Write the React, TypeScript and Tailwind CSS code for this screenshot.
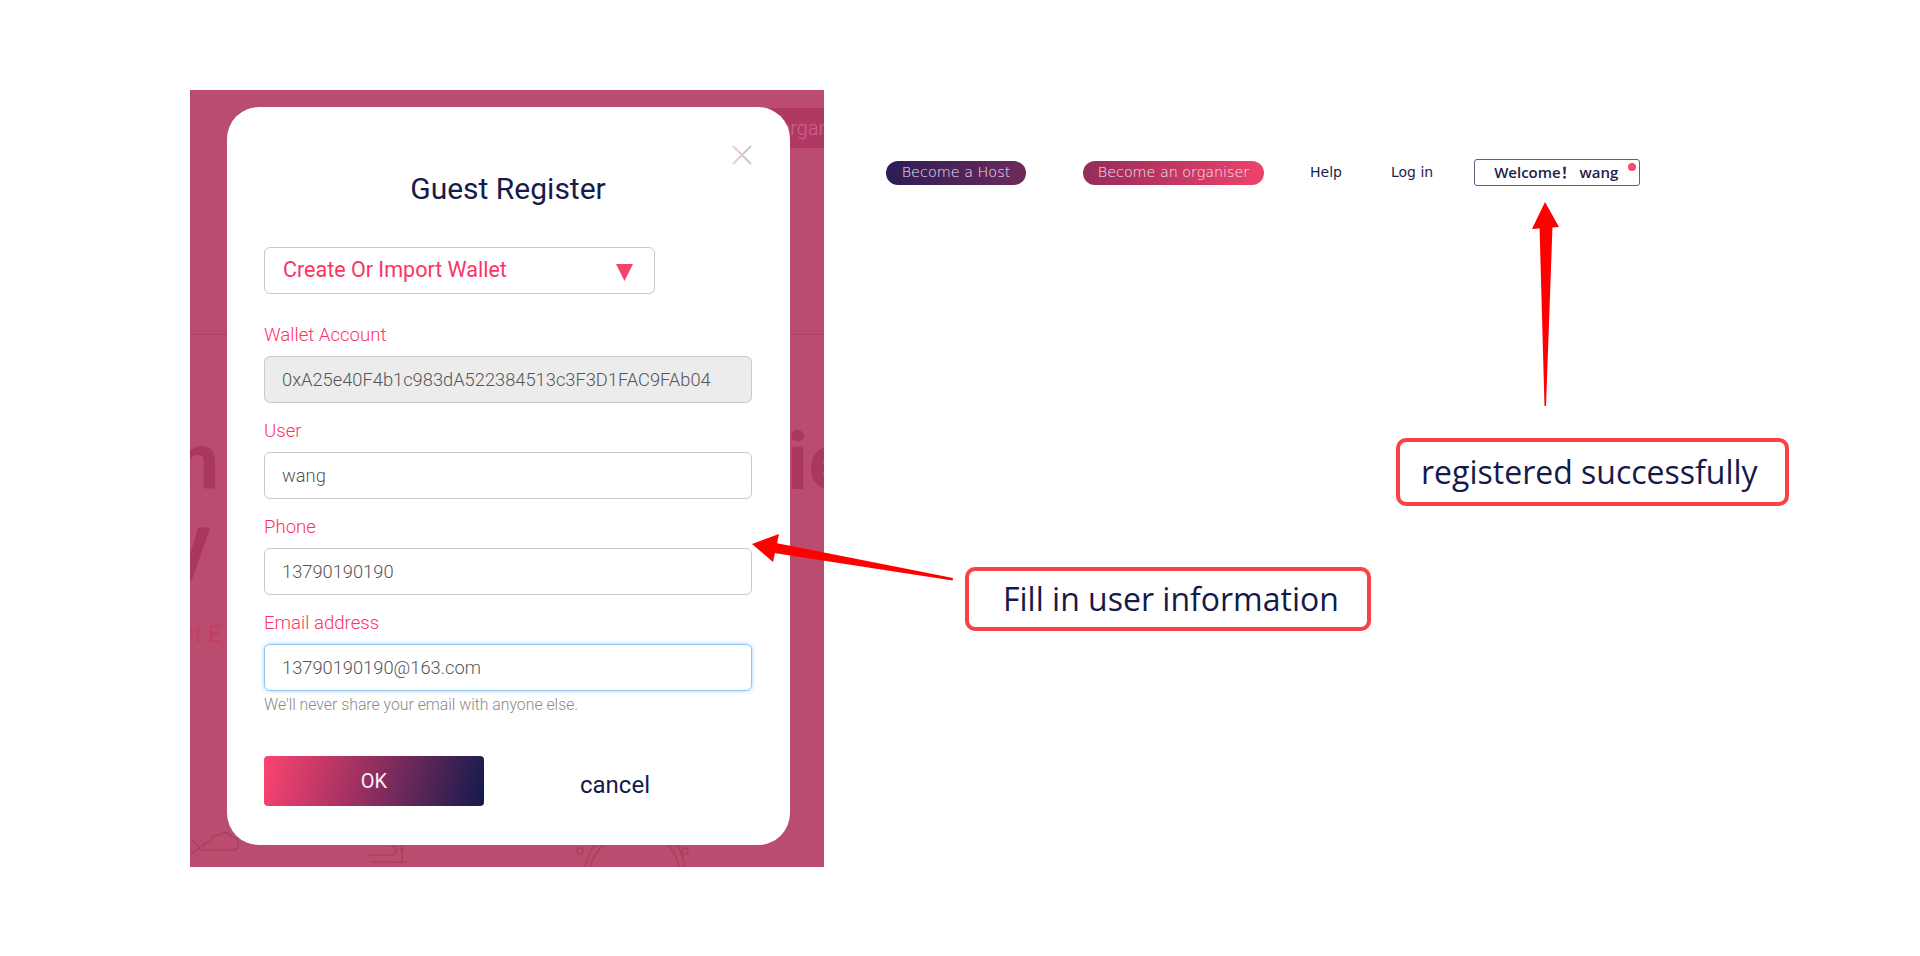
import React from "react";

const field =
  "h-[47px] w-full rounded-[6px] border border-[#c9c9c9] pl-[17px] text-[18.3px] font-light text-[#555555] flex items-center";

function Label({ children }: { children: React.ReactNode }) {
  return (
    <div className="h-[24px] leading-[24px] text-[18.6px] font-light text-[#fc3367]">
      {children}
    </div>
  );
}

function Underlay() {
  return (
    <>
      {/* faded nav strip of the page behind the overlay */}
      <div className="absolute left-[560px] top-[18px] h-[40px] w-[200px] bg-[#b13862]" />
      <div className="absolute left-[589px] top-[18px] h-[40px] flex items-center text-[20px] font-light text-[#c9658a]">
        organiser
      </div>
      <div className="absolute left-0 top-[244px] h-[1px] w-full bg-[#ad3f66]" />
      {/* hero text hidden behind the dialog */}
      <div className="absolute left-[-40px] top-[333px] h-[78px] overflow-hidden text-[80px] leading-[78px] font-bold text-[#a9375f]">m</div>
      <div className="absolute left-[597px] top-[333px] h-[78px] overflow-hidden text-[80px] leading-[78px] font-bold text-[#a9375f]">ie</div>
      <div className="absolute left-[-20px] top-[420px] text-[80px] leading-[66px] font-bold text-[#a9375f]">y</div>
      <div className="absolute left-[-8px] top-[530px] text-[24px] leading-[28px] text-[#c63c62]">st E</div>
      {/* faint background doodles */}
      <svg className="absolute left-0 top-[730px]" width="634" height="47" viewBox="0 0 634 47" fill="none" stroke="#a8405f" strokeWidth="1.5">
        <path d="M12 30 q0 -8 8 -8 q2 -8 10 -7 q6 -6 12 2 q7 0 6 8 q0 5 -6 5 h-24 q-6 0 -6 0z" />
        <path d="M2 20 l8 8 M0 34 l10 -6" />
        <path d="M178 35 h22 q6 0 6 -5 q0 -4 -5 -4 M182 42 h30" />
        <path d="M212 20 v22 M208 42 h8 M210 30 h4" />
        <path d="M395 47 q10 -40 50 -42 q44 2 50 42" />
        <path d="M400 47 q10 -32 45 -34 q38 2 44 34" />
        <circle cx="390" cy="31" r="3" />
        <circle cx="495" cy="31" r="3" />
      </svg>
    </>
  );
}

function CloseX() {
  return (
    <svg width="20" height="20" viewBox="0 0 20 20" className="absolute right-[38px] top-[38px]">
      <defs>
        <linearGradient id="xg" x1="0" y1="0" x2="1" y2="0">
          <stop offset="0" stopColor="#f7c9d5" />
          <stop offset="1" stopColor="#c3c6d4" />
        </linearGradient>
      </defs>
      <path d="M1 1 L19 19 M19 1 L1 19" stroke="url(#xg)" strokeWidth="2" />
    </svg>
  );
}

function Modal() {
  return (
    <div className="absolute left-[37px] top-[17px] h-[738px] w-[563px] rounded-[32px] bg-white pl-[37px] pr-[38px] pt-[64px] font-['Roboto',sans-serif]">
      <CloseX />
      <div className="text-center text-[30px] leading-[36px] text-[#161b4b]">Guest Register</div>

      <div className="mt-[40px] flex h-[47px] w-[391px] items-center justify-between rounded-[6px] border border-[#c9c9c9] pl-[18px] pr-[21px]">
        <span className="text-[21.5px] text-[#fc3367]">Create Or Import Wallet</span>
        <svg width="17" height="17" viewBox="0 0 17 17" className="mt-[3px]">
          <polygon points="0,0 17,0 8.5,17" fill="#f7416e" />
        </svg>
      </div>

      <div className="mt-[29px] flex flex-col gap-[16px]">
        <div>
          <Label>Wallet Account</Label>
          <div className={field + " mt-[9px] bg-[#ececec]"}>0xA25e40F4b1c983dA522384513c3F3D1FAC9FAb04</div>
        </div>
        <div>
          <Label>User</Label>
          <div className={field + " mt-[9px] bg-white"}>wang</div>
        </div>
        <div>
          <Label>Phone</Label>
          <div className={field + " mt-[9px] bg-white"}>13790190190</div>
        </div>
        <div>
          <Label>Email address</Label>
          <div className="mt-[9px] flex h-[47px] w-full items-center rounded-[6px] border border-[#8fc4f3] bg-white pl-[17px] text-[18.3px] font-light text-[#555555] shadow-[0_0_4px_rgba(64,150,255,0.45)]">
            13790190190@163.com
          </div>
        </div>
      </div>
      <div className="mt-[3px] text-[15.8px] leading-[22px] font-light text-[#8a8a8a]">
        We'll never share your email with anyone else.
      </div>

      <div className="mt-[40px] flex items-center">
        <div className="flex h-[50px] w-[220px] items-center justify-center rounded-[4px] bg-[linear-gradient(105deg,#fd4470_0%,#9a3060_45%,#121a4d_100%)] text-[20px] text-[#f6eef2]">
          OK
        </div>
        <div className="mt-[7px] flex-1 pr-[6px] text-center text-[24px] leading-[28px] text-[#141a4a]">cancel</div>
      </div>
    </div>
  );
}

function Nav() {
  return (
    <div className="flex items-center font-['DejaVu_Sans',sans-serif]">
      <div className="flex h-[24px] w-[140px] items-center justify-center rounded-full bg-[linear-gradient(90deg,#2b1d56,#6e2a5b)] text-[14.4px] font-extralight text-[#eee2f3]">
        Become a Host
      </div>
      <div className="ml-[57px] flex h-[24px] w-[181px] items-center justify-center rounded-full bg-[linear-gradient(90deg,#942c5b,#ee436b)] text-[14.3px] font-extralight text-[#f6e4ee]">
        Become an organiser
      </div>
      <div className="ml-[46px] text-[14px] text-[#1b1f4a]">Help</div>
      <div className="ml-[49px] text-[14px] text-[#1b1f4a]">Log in</div>
      <div className="relative ml-[41px] flex h-[27px] w-[166px] items-center rounded-[3px] border-[1.5px] border-[#5d6088] pl-[19px] font-['Open_Sans','Noto_Sans_CJK_SC',sans-serif] text-[15px] font-semibold text-[#1b1f4a]">
        Welcome！ wang
        <span className="absolute right-[3px] top-[3px] h-[8px] w-[8px] rounded-full bg-[#f34e70]" />
      </div>
    </div>
  );
}

function Arrows() {
  return (
    <svg className="pointer-events-none absolute left-0 top-0" width="1920" height="956" viewBox="0 0 1920 956">
      <g fill="#ff0000">
        <polygon points="1545,202 1559,227 1532,229" />
        <polygon points="1539.5,226 1552.5,226 1546,406 1544.5,406" />
        <polygon points="752,544 779,534 773,562" />
        <polygon points="776,543 953,578 952.6,580.5 774,553" />
      </g>
    </svg>
  );
}

export default function App() {
  return (
    <div className="relative h-[956px] w-[1920px] overflow-hidden bg-white">
      <div className="flex items-start">
        <div className="relative ml-[190px] mt-[90px] h-[777px] w-[634px] overflow-hidden bg-[#b94c6f] font-['Roboto',sans-serif]">
          <Underlay />
          <Modal />
        </div>
        <div className="ml-[62px] mt-[159px]">
          <Nav />
        </div>
      </div>

      <div className="absolute left-[1396px] top-[438px] flex h-[68px] w-[393px] items-center rounded-[10px] border-[4px] border-[#fb4141] pl-[21px] font-['Open_Sans',sans-serif] text-[32px] leading-[44px] text-[#161a4a]">
        registered successfully
      </div>
      <div className="absolute left-[965px] top-[567px] flex h-[64px] w-[406px] items-center rounded-[10px] border-[4px] border-[#fb4141] pl-[34px] font-['Open_Sans',sans-serif] text-[32px] leading-[44px] text-[#161a4a]">
        Fill in user information
      </div>
      <Arrows />
    </div>
  );
}
